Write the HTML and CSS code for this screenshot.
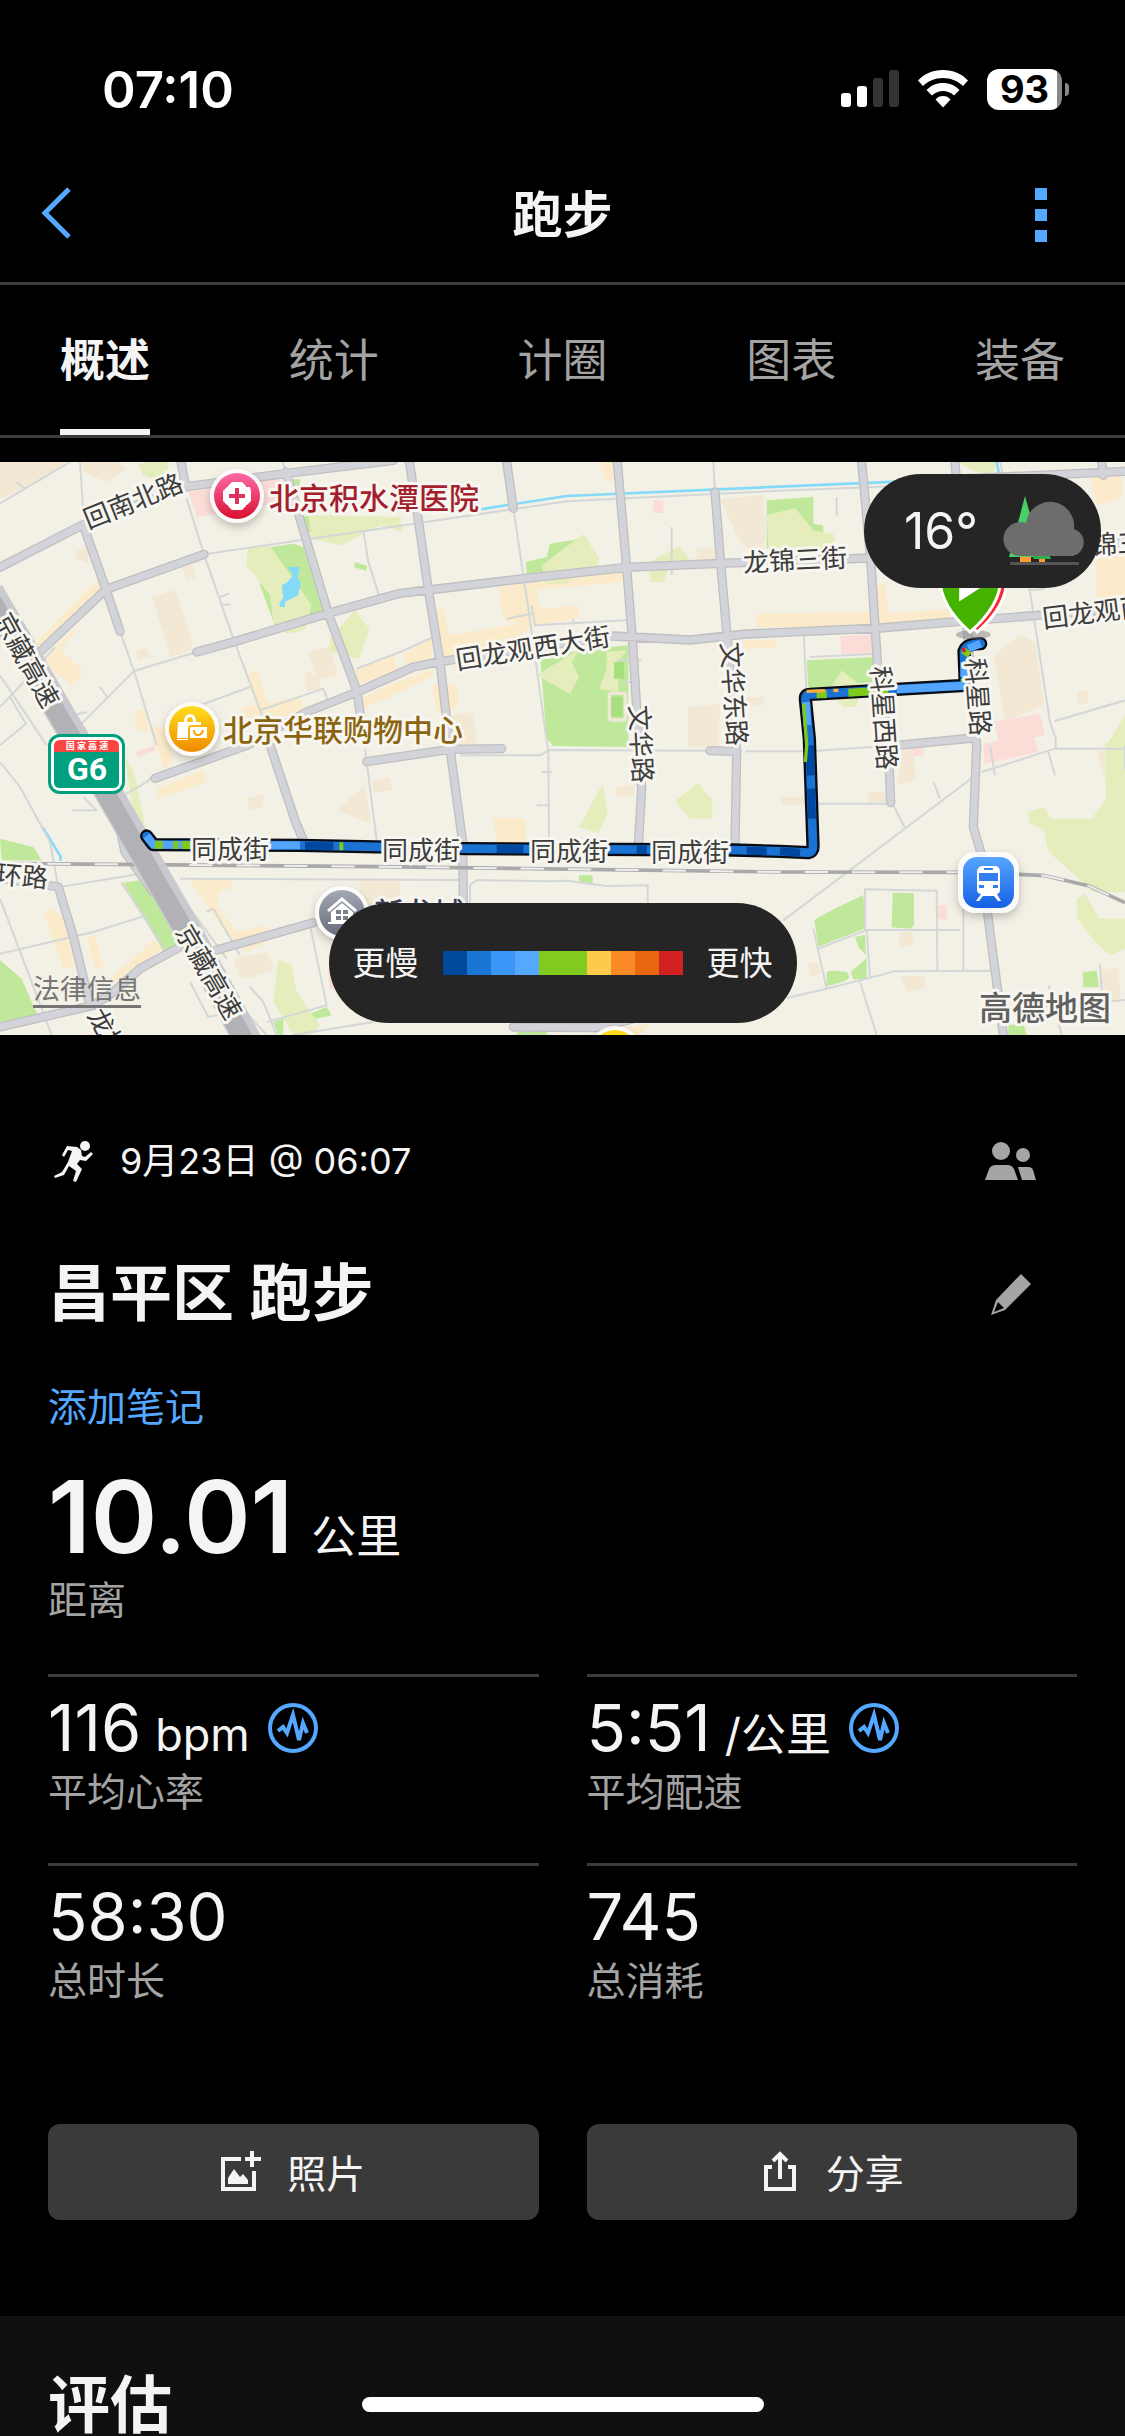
FILE: index.html
```html
<!DOCTYPE html>
<html lang="zh-CN">
<head>
  <meta charset="UTF-8">
  <meta name="viewport" content="width=device-width, initial-scale=1.0">
  <title>跑步</title>
  <link rel="stylesheet" href="styles.css">
</head>
<body>

  <!-- Status bar -->
  <div class="status-bar">
    <span class="time">07:10</span>
    <div class="status-icons">
      <svg class="signal" viewBox="0 0 58 38">
        <rect x="0" y="23" width="10" height="14" rx="3"></rect>
        <rect x="16" y="16" width="10" height="21" rx="3"></rect>
        <rect class="off" x="32" y="8" width="10" height="29" rx="3"></rect>
        <rect class="off" x="48" y="0" width="10" height="37" rx="3"></rect>
      </svg>
      <svg class="wifi" viewBox="0 0 52 38">
        <path d="M26 0C36 0 45 4 51 10.500L46 16C41 11 34 8 26 8S11 11 6 16L1 10.500C7 4 16 0 26 0Z"></path>
        <path d="M26 13C32.500 13 38 15.500 42.500 20L37 25.500C34 22.500 30 21 26 21S18 22.500 15 25.500L9.500 20C14 15.500 19.500 13 26 13Z"></path>
        <path d="M26 26C29 26 31.500 27 33.500 29.500L26 37.500L18.500 29.500C20.500 27 23 26 26 26Z"></path>
      </svg>
      <div class="battery"><span>93</span></div>
    </div>
  </div>

  <!-- Nav -->
  <header class="nav">
    <button class="nav-btn back" aria-label="返回">
      <svg viewBox="0 0 34 56"><path d="M29 2L5 26L29 50"></path></svg>
    </button>
    <h1>跑步</h1>
    <button class="nav-btn more" aria-label="更多">
      <svg viewBox="0 0 12 54">
        <rect width="12" height="12"></rect>
        <rect y="21" width="12" height="12"></rect>
        <rect y="42" width="12" height="12"></rect>
      </svg>
    </button>
  </header>

  <nav class="tabs">
    <a href="#" class="active">概述</a>
    <a href="#">统计</a>
    <a href="#">计圈</a>
    <a href="#">图表</a>
    <a href="#">装备</a>
  </nav>

  <!-- Map -->
  <section class="map">
    <svg class="map-canvas" viewBox="0 0 1125 573">
      <defs>
        <linearGradient id="red" x1="0" y1="0" x2="0" y2="1"><stop offset="0" stop-color="#ff6aa8"></stop><stop offset="1" stop-color="#d80f30"></stop></linearGradient>
        <linearGradient id="yellow" x1="0" y1="0" x2="0" y2="1"><stop offset="0" stop-color="#ffde1a"></stop><stop offset="1" stop-color="#f08a00"></stop></linearGradient>
        <linearGradient id="gray" x1="0" y1="0" x2="0" y2="1"><stop offset="0" stop-color="#a3a8b4"></stop><stop offset="1" stop-color="#686d7c"></stop></linearGradient>
        <linearGradient id="blue" x1="0" y1="0" x2="0" y2="1"><stop offset="0" stop-color="#58a6ff"></stop><stop offset="1" stop-color="#155fe4"></stop></linearGradient>
        <filter id="shadow" x="-50%" y="-50%" width="200%" height="200%"><feDropShadow dx="0" dy="4" stdDeviation="4" flood-opacity="0.25"></feDropShadow></filter>
        <path id="roads" d="M0 316L245 190L560 74L860 34L1180 -5M250 190L318 382L360 508M318 382L612 277M318 382L115 574M543 0L556 70M858 30L985 455L1072 690L1085 790M590 570L700 540L988 453L1200 394L1285 384L1570 350L1880 316L2160 304L2610 288L3375 240M465 949L740 850L920 750L1072 690L1240 615L1320 599L1840 522L2070 534L2240 516L2640 498L2880 478L3375 440M1100 899L1350 862L1505 860M1228 0L1258 194L1285 384L1320 599L1350 860L1388 1140L1390 1330M1520 0L1540 139M1852 0L1880 316L1897 530L1910 740L1925 980L1915 1150M2145 90L2162 304L2182 530L2210 870L2205 1150M2130 866L2205 868M2585 0L2612 290L2632 600L2665 850L2672 1022M2865 0L2900 480L2930 850L2920 1095L2945 1180L2962 1350L2995 1600L3010 1719M2900 50L3375 28M3305 0L3310 40M2690 850L2920 828M812 855L885 1075L912 1140M0 1249L140 1269L175 1275L220 1424L270 1630M0 1695L280 1630L340 1590L420 1520L540 1455M650 1464L940 1382M1540 1695L1790 1697L1900 1670M360 1100L375 1170L460 1290"></path>
        <path id="railway" d="M0 1204L1140 1214L2340 1230L2875 1231L3055 1237L3135 1241L3265 1271L3375 1322"></path>
        <path id="run" d="M440 1122L460 1148L900 1150L1400 1160L2200 1164L2340 1168L2425 1172Q2440 1170 2439 1150L2428 830L2416 710Q2416 697 2430 697L2895 670V640L2892 568Q2900 545 2942 545"></path>
      </defs>

      <svg width="1125" height="573" viewBox="0 0 3375 1719">
        <rect width="3375" height="1719" fill="#f3f0e5"></rect>

        <!-- blocks -->
        <g fill="#f2e8d3">
          <path d="M0 0H200L120 60L0 110ZM245 0H350L380 20L320 60L250 30ZM455 405L525 385L565 495L578 565L510 585L480 480ZM225 270L265 250V305L230 290ZM545 310L575 305L588 345L560 355ZM408 565L440 560L452 585L415 595ZM925 570L990 552L1012 640L955 655ZM915 630L955 640L960 680L920 688Z"></path>
          <path d="M2160 110L2290 100V280L2225 250ZM2090 260H2145V300H2090ZM2065 735L2160 725L2155 855H2065ZM2200 705H2290V730L2200 735ZM2980 580L3060 520L3105 540L3133 730L3015 778ZM3235 690L3262 685V725H3230ZM1350 760L1420 750L1430 850L1370 865ZM740 1010L790 995V1035L750 1045ZM1010 1045L1095 970L1113 1085L1060 1065ZM1118 955L1170 948L1176 985L1120 992ZM1080 1255H1200V1330H1080ZM700 1490L800 1470L824 1520L750 1548L720 1545ZM1846 977L1905 970L1900 1003H1846Z"></path>
          <path d="M2343 1005H2440V1028H2343ZM2605 990H2660V1020H2605ZM2710 860H2740L2747 955L2690 970ZM2698 1410H2738V1450L2698 1455ZM2700 1542H2775V1580L2720 1588ZM2425 1505L2455 1500L2460 1538L2430 1542ZM3290 866H3320V965ZM3300 1522L3355 1518L3362 1615L3310 1610Z"></path>
        </g>
        <g fill="#fbebcb">
          <path d="M100 550L295 350L303 382L120 580ZM125 595L225 500L230 510L180 560L252 630L215 668L140 615ZM405 748L435 742L445 810L405 800ZM455 795H500L520 900L490 920ZM740 640L770 620L805 728L775 745ZM725 735L900 708L915 750L740 790ZM1060 625L1180 580L1192 628L1070 668ZM1090 705L1200 660L1240 640V670L1090 740Z"></path>
          <path d="M1205 580L1295 525V590L1220 605ZM1310 440H1330L1345 520L1590 480V500L1500 560L1320 600ZM1495 375L1870 330V358L1610 385L1625 440L1738 430L1735 470L1600 490L1510 475ZM1140 680L1300 620V640L1140 720ZM1295 670L1370 665L1375 730L1340 755L1310 750ZM1800 0H1840V60L1810 50ZM2270 455L2640 450V495H2270ZM2230 535H2330V558L2230 560ZM2630 370L2655 365L2665 455L2850 440V490H2640ZM3270 45L3365 42V110L3290 130ZM3290 290L3375 280V410H3290ZM470 980L610 925L620 960L500 1000L475 1010ZM570 1255H695V1280L660 1285L650 1330L710 1410L800 1390V1440L740 1470L680 1420ZM130 1350L155 1340L190 1365L225 1510L190 1520ZM260 1425L285 1420L312 1520L285 1520ZM330 1550L460 1435L490 1460L340 1560ZM1480 1068H1577V1150L1490 1145ZM1860 1700L1950 1685L1920 1719H1850Z"></path>
        </g>
        <g fill="#fbdcd7">
          <path d="M565 90L840 48L850 120L590 165ZM1960 115H1990V153H1960ZM2520 522L2620 518V575H2525ZM2980 780L3120 755L3135 820L3000 850ZM2950 845L3100 820L3115 870L2955 905ZM2735 855H2770V882H2740ZM408 870L465 850V865L415 885ZM2815 1330H2840V1372H2815ZM985 1530L1010 1500V1580H988Z"></path>
        </g>
        <g fill="#bfe89a">
          <path d="M880 52H900V75H880ZM905 160L935 165V210L920 210ZM780 260L880 245L910 255L972 450L825 492L780 370ZM1065 300L1102 312L1098 326L1062 316ZM1650 245L1760 228L1775 270L1797 290L1790 315L1580 335L1578 300L1640 285ZM1620 580L1885 550L1885 855L1660 852L1640 830ZM2300 115L2440 105V185L2470 190V212L2300 260ZM2420 595L2625 585L2620 660L2425 680ZM0 1130L100 1155L125 1195H5ZM370 1262L420 1255L460 1290L540 1450L490 1468ZM0 1495L65 1550L95 1620L115 1662L0 1680ZM1737 1240H1778V1262H1737ZM930 1655L980 1635L995 1660L940 1672ZM820 1680L850 1670V1719H835ZM1550 1710H1640V1719H1550Z"></path>
          <path d="M2443 1375Q2450 1365 2590 1299Q2594 1350 2593 1400L2455 1454ZM2678 1292L2742 1294V1390L2730 1400L2675 1396ZM2480 1530Q2490 1522 2540 1530L2548 1545Q2540 1560 2480 1572ZM2552 1530L2600 1488V1550L2560 1552ZM2565 1425L2595 1418L2598 1480L2575 1455ZM3248 1530L3290 1526L3297 1575L3250 1576ZM3025 1690L3070 1684L3080 1719H3025Z"></path>
        </g>
        <g fill="#e5edbc">
          <path d="M415 10L440 0H505V35L470 55L430 40ZM925 160L1200 165L1210 210L1140 190L1025 250L935 230ZM745 258L810 252L935 430L915 505L860 515L820 480L810 400L737 308ZM1065 445L1108 500L1078 590L990 570V530ZM1625 310L1750 217L1795 285V312L1715 350L1700 365H1640ZM1945 302L2035 253L2072 295L2005 320L1990 360H1950ZM2300 160L2385 138L2440 205L2500 215L2508 260H2305ZM2875 0H2990L2980 35L2930 30ZM1610 640L1740 560L1715 600L1737 645L1710 695ZM1820 570L1880 565L1855 600V690L1797 680L1820 620ZM1808 965L1823 1055L1795 1112L1737 1095ZM2095 962L2137 1015V1070H2070L2025 1017ZM375 890L400 925L440 1110L405 1090ZM835 1490L875 1510L890 1590L960 1690L930 1719H880L820 1620ZM2485 690L2525 625L2580 670L2570 735H2530Z"></path>
          <path d="M3317 840L3375 850V1290H3280L3145 1168L3130 1105L3085 1080V1050L3130 1035L3155 1070H3275L3317 1015ZM3230 1310L3255 1295L3297 1370H3375V1460L3330 1480L3285 1440L3232 1370ZM3320 850L3375 760V880H3320Z"></path>
        </g>
        <path fill="#a8e080" d="M1842 600H1872V650H1842ZM1833 704H1868V764H1833Z"></path>
        <path fill="#85dafa" d="M862 315H898V330L892 342L902 365L895 400L870 412L855 420V435H840L838 425L850 405L845 370L860 362L880 340Z"></path>
        <g fill="none" stroke="#efe8d9" stroke-width="10">
          <rect x="1828" y="694" width="48" height="80" rx="6"></rect>
          <rect x="480" y="402" width="54" height="96" rx="27" transform="rotate(-12 507 450)"></rect>
          <rect x="2074" y="738" width="48" height="100" rx="20"></rect>
          <rect x="2245" y="150" width="46" height="92" rx="14"></rect>
        </g>

        <!-- canals -->
        <path class="canal" d="M1440 142L1700 102L2340 74L2760 56M2990 0L3002 60M128 1096L182 1184V1196"></path>

        <!-- small streets -->
        <path class="lane" d="M0 124L210 0M240 0L250 150M560 110L612 277L700 530L820 850M612 277L900 235L1140 200L1700 118L2340 86L2760 70M848 0L858 34M1090 205L1105 300L1137 400M50 60L75 80M660 405L688 395M665 428H692M360 508L402 627L470 850M402 627L590 570M402 627L245 785M170 770L260 750M300 675L325 710M600 730L750 675M780 745L970 680L985 720M1070 620L1200 570L1300 525M0 735L60 672L165 555M0 900L60 975L150 1140L175 1275M30 705L78 785L0 850M0 640L140 850M180 1275L430 1234M370 1000L440 960L455 945M250 1005L290 1045L215 1045M365 1262L500 1470M0 1310L155 1719M0 1475L280 1410L440 1360M1095 860L1130 1135M540 1250L1390 1254M1410 1330V1270L1430 1254L1640 1258L1700 1256L1820 1272L1943 1270V1330M570 1340L680 1490M600 1500L800 1719M620 1350L640 1340L720 1480M570 1560L625 1665L670 1655M930 1390L980 1630L800 1680M750 1575L790 1620L830 1719M880 1719L1120 1680"></path>
        <path class="lane" d="M1540 139L1585 440L1645 870L1647 1150M1647 864L2130 866M1647 864L1620 880H1380M1605 490L1880 475M1720 470V490M1595 430L1605 490M1520 470L1595 455M2410 495L2425 800L2430 868M2235 868H2430L2690 850M2430 585L2620 576M2140 0L2145 90M1850 595H1925M1870 660H1920M1625 930H1655M1610 1030H1650M2015 195V340M2510 105V160M3000 0L3090 390L3150 780L3167 830V860M3085 385L3135 380M3163 778L3375 715M2970 850L2985 940M2455 1025H2680M2680 1030L2715 1098M2920 945L2350 1375M2800 960L2820 1010M2945 930L3165 860H3375M3145 870L3165 940M3375 850V920M2595 1410V1282L2810 1286L2812 1525M2600 1404H2880M2455 1460L2600 1404L2610 1550M2440 1400L2480 1580L2640 1540L2680 1528L2990 1526M2360 1608L2480 1580M2580 1560L2630 1719M2890 1340V1525M3300 1508L3305 1585M3146 1570L3185 1719M3060 1640L3375 1614"></path>

        <!-- main roads, railway, highway -->
        <use href="#roads" class="casing"></use>
        <use href="#roads" class="paving"></use>
        <use href="#railway" class="rail"></use>
        <use href="#railway" class="rail-dash"></use>
        <path class="highway-side" d="M-30 390L190 770L330 1000L560 1400L745 1740"></path>
        <path class="highway" d="M-40 390L180 770L320 1000L550 1400L735 1740"></path>

        <!-- track -->
        <use href="#run" class="track-outline"></use>
        <use href="#run" class="track-base"></use>
        <g class="pace">
          <path stroke="#52a5fb" d="M440 1122L460 1148H570M640 1151L900 1150M2418 720L2422 790M2690 682L2890 671M2905 560L2942 545M2893 645V600"></path>
          <path stroke="#00479e" d="M915 1152L1000 1153M1160 1156H1340M1490 1161L1570 1162M1620 1162H1700M1910 1163L1940 1164M2240 1166L2300 1168M2340 1168L2400 1172M2430 850L2432 940M2433 980L2436 1070"></path>
          <path stroke="#80c81c" d="M465 1148H488M520 1149H535M545 1149L640 1150M1018 1153H1030M2450 697H2480M2545 692L2665 685M2893 580L2905 565M2894 650V660"></path>
        </g>
        <g class="pace thin">
          <path stroke="#80c81c" d="M2411 725L2420 850L2416 900"></path>
          <path stroke="#fbb040" d="M2420 688L2475 686M2500 685H2515"></path>
          <path stroke="#d4221f" d="M2888 558L2895 570"></path>
        </g>

        <!-- start and finish pins -->
        <ellipse cx="2920" cy="518" rx="52" ry="14" fill="#777" opacity="0.45"></ellipse>
        <g class="pins">
          <path fill="#fb2530" d="M2932 510Q2842 430 2845 350A87 87 0 0 1 3020 350Q3022 430 2932 510Z"></path>
          <path fill="#46b200" d="M2910 510Q2820 430 2820 350A90 90 0 0 1 3002 350Q3002 430 2910 510Z"></path>
          <path fill="#fff" stroke="none" d="M2882 310V410L2960 360Z"></path>
        </g>
      </svg>

      <!-- road names -->
      <g class="road-names">
        <text x="133" y="39" transform="rotate(-22 133 39)">回南北路</text>
        <text x="27" y="198" transform="rotate(61 27 198)">京藏高速</text>
        <text x="209" y="510" transform="rotate(60 209 510)">京藏高速</text>
        <text x="108" y="571" transform="rotate(60 108 571)">龙域</text>
        <text x="22" y="414" transform="rotate(5 22 414)">环路</text>
        <text x="230" y="387">同成街</text>
        <text x="421" y="388">同成街</text>
        <text x="569" y="389">同成街</text>
        <text x="690" y="390">同成街</text>
        <text x="533" y="186" transform="rotate(-9 533 186)">回龙观西大街</text>
        <text x="795" y="98" transform="rotate(-3 795 98)">龙锦三街</text>
        <text x="734" y="232" transform="rotate(86 734 232)">文华东路</text>
        <text x="641" y="282" transform="rotate(87 641 282)">文华路</text>
        <text x="884" y="256" transform="rotate(86 884 256)">科星西路</text>
        <text x="978" y="235" transform="rotate(86 978 235)">科星路</text>
        <text x="1120" y="147" transform="rotate(-7 1120 147)">回龙观西大街</text>
        <text x="1130" y="81" transform="rotate(-3 1130 81)">锦三街</text>
      </g>

      <!-- places -->
      <g filter="url(#shadow)" fill="#fff" fill-opacity="0.85">
        <circle cx="237" cy="34" r="27"></circle>
        <circle cx="192" cy="267" r="27"></circle>
        <circle cx="342" cy="451" r="27"></circle>
        <circle cx="615" cy="591" r="27"></circle>
        <rect x="958" y="390" width="61" height="61" rx="17"></rect>
      </g>
      <circle cx="237" cy="34" r="23" fill="url(#red)"></circle>
      <circle cx="192" cy="267" r="23" fill="url(#yellow)"></circle>
      <circle cx="342" cy="451" r="23" fill="url(#gray)"></circle>
      <circle cx="615" cy="591" r="23" fill="url(#yellow)"></circle>
      <rect x="963" y="395" width="51" height="51" rx="14" fill="url(#blue)"></rect>
      <g fill="#fff">
        <path d="M232 20H242L246 24V25H250L251 29V39L247 43H246V44L242 48H232L228 44V43H227L223 39V29L227 25H228V24Z"></path>
        <path fill="#e2305c" d="M235 26H239V32H245V36H239V42H235V36H229V32H235Z"></path>
        <path d="M178 260H201V263H191Q188 263 188 266V276H177ZM190 265H207V276H190ZM177 277H188V278H177ZM184 260Q184 252 190 252T196 260H193Q193 255 190 255T187 260Z"></path>
        <path fill="none" stroke="#f5a800" stroke-width="2" d="M194 268Q194 273 198 273T203 268"></path>
        <path d="M342 435L357 448L355 450L342 439L329 450L327 448ZM331 450L342 441L353 450V460H356V462H328V460H331Z"></path>
        <path fill="#7b808d" d="M336 448H341V452H336ZM343 448H348V452H343ZM336 454H341V458H336ZM343 454H348V458H343Z"></path>
        <path d="M982 404H996Q1000 405 1000 410V428Q1000 432 996 432H982Q977 432 977 428V410Q977 405 982 404ZM981 432L976 439H979L983 434H994L998 439H1001L997 432Z"></path>
        <path fill="#347fef" d="M984 406H993V408H984ZM979 411H998V419H979ZM979 423H984V426H979ZM993 423H998V426H993Z"></path>
      </g>
      <g class="place-names">
        <text x="269" y="47" fill="#a31f2e">北京积水潭医院</text>
        <text x="223" y="279" fill="#8a6410">北京华联购物中心</text>
        <text x="374" y="462" fill="#3c3f58">新龙城</text>
      </g>

      <!-- highway shield -->
      <rect x="48" y="272" width="77" height="60" rx="12" fill="#00a07e"></rect>
      <rect x="51" y="275" width="71" height="54" rx="9" fill="#fff"></rect>
      <path fill="#fc4440" d="M54 290V284Q54 278 60 278H113Q119 278 119 284V290Z"></path>
      <path fill="#00a07e" d="M54 290H119V320Q119 326 113 326H60Q54 326 54 320Z"></path>
      <text class="shield-top" x="87" y="287">国 家 高 速</text>
      <text class="shield-code" x="87" y="318">G6</text>

      <text class="brand" x="1111" y="558">高德地图</text>
    </svg>

    <a href="#" class="legal">法律信息</a>

    <div class="weather">
      <span>16°</span>
      <svg viewBox="0 0 84 70">
        <path fill="#48cf66" d="M23 0L40 61H7Z"></path>
        <path fill="#2fae4c" d="M40 40L49 63H31Z"></path>
        <path fill="#ff9a30" d="M18 61H29V66H18ZM37 63H43V66H37Z"></path>
        <rect x="8" y="66" width="69" height="3" rx="1" fill="#555"></rect>
        <path fill="#6d6d6d" d="M17 60A17 17 0 1 1 24 27A24 24 0 0 1 72 33A14 14 0 0 1 71 60Z"></path>
      </svg>
    </div>

    <div class="legend">
      <span>更慢</span>
      <div class="scale">
        <i class="c1"></i><i class="c2"></i><i class="c3"></i><i class="c4"></i><i class="c5"></i>
        <i class="c5"></i><i class="c6"></i><i class="c7"></i><i class="c8"></i><i class="c9"></i>
      </div>
      <span>更快</span>
    </div>
  </section>

  <!-- Activity summary -->
  <main class="summary">
    <div class="row date-row">
      <svg class="runner" viewBox="0 0 40 42">
        <circle cx="31" cy="6" r="5"></circle>
        <path d="M13 6L23 7L27 10L28 16L31 17L37 12L39 14L32 21L26 20L23 24L28 29L22 42L19 41L22 31L15 26L10 35L1 38L0 36L8 32L14 22L18 11L14 10L10 17L8 15Z"></path>
      </svg>
      <span class="date">9月23日 @ 06:07</span>
      <button class="icon-btn" aria-label="隐私">
        <svg class="people" viewBox="0 0 52 39">
          <circle cx="16" cy="9" r="9"></circle>
          <circle cx="38" cy="13" r="7"></circle>
          <path d="M0 38L4 27Q6 23 11 23H22Q27 23 29 27L33 38ZM33 25H43Q47 25 48 28L51 38H37Z"></path>
        </svg>
      </button>
    </div>

    <div class="row title-row">
      <h2>昌平区 跑步</h2>
      <button class="icon-btn" aria-label="编辑">
        <svg class="pencil" viewBox="0 0 40 41">
          <path fill-rule="evenodd" d="M30 0L40 10L14 36L0 41L5 26ZM7 28L3 38L13 34Z"></path>
        </svg>
      </button>
    </div>

    <a href="#" class="note">添加笔记</a>

    <div class="distance">
      <p class="total">10.01<span class="unit">公里</span></p>
      <p class="label">距离</p>
    </div>

    <div class="stats">
      <div class="stat">
        <p class="value">116<span class="unit">bpm</span>
          <svg class="pulse" viewBox="0 0 50 50"><circle cx="25" cy="25" r="23"></circle><path d="M10 28L15 24L19 30L25 12L31 37L35 20L39 30"></path></svg>
        </p>
        <p class="label">平均心率</p>
      </div>
      <div class="stat">
        <p class="value">5:51<span class="unit">/公里</span>
          <svg class="pulse" viewBox="0 0 50 50"><circle cx="25" cy="25" r="23"></circle><path d="M10 28L15 24L19 30L25 12L31 37L35 20L39 30"></path></svg>
        </p>
        <p class="label">平均配速</p>
      </div>
      <div class="stat">
        <p class="value">58:30</p>
        <p class="label">总时长</p>
      </div>
      <div class="stat">
        <p class="value">745</p>
        <p class="label">总消耗</p>
      </div>
    </div>

    <div class="actions">
      <button>
        <svg viewBox="0 0 40 40"><path fill="none" stroke="#f4f4f4" stroke-width="4" d="M20 8H2V38H33V20M31 0V16M24 8H40"></path><path fill="#f4f4f4" d="M7 33V27L13 18L19 26L22 23L27 29V33Z"></path></svg>
        照片
      </button>
      <button>
        <svg viewBox="0 0 40 40"><path fill="none" stroke="#f4f4f4" stroke-width="4" d="M12 16H6V38H34V16H28M20 28V4M13 10L20 3L27 10"></path></svg>
        分享
      </button>
    </div>
  </main>

  <section class="evaluation">
    <h2>评估</h2>
  </section>

  <div class="home-indicator"></div>

</body>
</html>
```

FILE: styles.css
```css
* {
  box-sizing: border-box;
  margin: 0;
  padding: 0;
}

body {
  display: flex;
  flex-direction: column;
  min-height: 100vh;
  background: #000;
  color: #f4f4f4;
  font-family: Inter, "Noto Sans CJK SC", sans-serif;
}

button {
  border: none;
  background: none;
  color: inherit;
  font-family: inherit;
}

a {
  text-decoration: none;
}

svg {
  display: block;
}

/* Status bar */
.status-bar {
  display: flex;
  justify-content: space-between;
  align-items: center;
  height: 148px;
  padding: 30px 63px 0 102px;
  color: #fff;
}

.time {
  font-size: 51px;
  font-weight: 600;
}

.status-icons {
  display: flex;
  align-items: center;
  gap: 18px;
  fill: #fff;
}

.signal {
  width: 58px;
  height: 38px;
}

.signal .off {
  fill: #333;
}

.wifi {
  width: 52px;
  height: 38px;
}

.battery {
  position: relative;
  width: 75px;
  height: 41px;
  border-radius: 12px;
  background: linear-gradient(to right, #fff 70px, #888 70px);
  color: #000;
  font-size: 38px;
  font-weight: 700;
  line-height: 41px;
  text-align: center;
}

.battery::after {
  content: "";
  position: absolute;
  top: 14px;
  right: -7px;
  width: 4px;
  height: 13px;
  border-radius: 0 4px 4px 0;
  background: #888;
}

/* Nav */
.nav {
  display: flex;
  justify-content: space-between;
  align-items: center;
  height: 137px;
  padding: 0 40px;
  border-bottom: 3px solid #3c3c3c;
}

.nav h1 {
  font-size: 50px;
  font-weight: 600;
  line-height: 60px;
}

.nav-btn {
  display: flex;
  align-items: center;
  width: 90px;
  height: 90px;
}

.back svg {
  width: 34px;
  height: 56px;
  fill: none;
  stroke: #55a8ff;
  stroke-width: 5;
}

.more {
  justify-content: flex-end;
  padding-right: 38px;
}

.more svg {
  width: 12px;
  height: 54px;
  fill: #55a8ff;
}

/* Tabs */
.tabs {
  display: flex;
  justify-content: space-between;
  padding: 0 60px;
  border-bottom: 3px solid #3c3c3c;
}

.tabs a {
  height: 150px;
  color: #a3a3a3;
  font-size: 45px;
  line-height: 152px;
}

.tabs .active {
  border-bottom: 6px solid #f4f4f4;
  color: #f4f4f4;
  font-weight: 600;
}

/* Map */
.map {
  position: relative;
  margin-top: 24px;
  overflow: hidden;
}

.map-canvas {
  width: 100%;
  height: auto;
}

.canal,
.lane,
.casing,
.paving,
.rail,
.rail-dash,
.highway,
.highway-side,
.track-outline,
.track-base,
.pace {
  fill: none;
  stroke-linejoin: round;
}

.canal {
  stroke: #85dafa;
  stroke-width: 8;
}

.lane {
  stroke: #d3d7d8;
  stroke-width: 6;
}

.casing {
  stroke: #c0c0c3;
  stroke-width: 28;
  stroke-linecap: round;
}

.paving {
  stroke: #d3d4d9;
  stroke-width: 20;
  stroke-linecap: round;
}

.rail {
  stroke: #a9a9a9;
  stroke-width: 11;
}

.rail-dash {
  stroke: #eee;
  stroke-width: 6;
  stroke-dasharray: 70 72;
}

.highway-side {
  stroke: #c9cacf;
  stroke-width: 84;
}

.highway {
  stroke: #b1b1b6;
  stroke-width: 58;
}

.track-outline {
  stroke: #080c14;
  stroke-width: 40;
  stroke-linecap: round;
}

.track-base {
  stroke: #1a72d2;
  stroke-width: 26;
  stroke-linecap: round;
}

.pace {
  stroke-width: 24;
}

.thin {
  stroke-width: 10;
}

.pins path {
  stroke: #fff;
  stroke-width: 9;
}

.map-canvas text {
  paint-order: stroke;
  stroke: #f8f6f0;
  stroke-width: 6px;
  stroke-linejoin: round;
}

.road-names text {
  fill: #3d3d3d;
  font-size: 26px;
  text-anchor: middle;
  dominant-baseline: central;
}

.place-names text {
  font-size: 30px;
  font-weight: 500;
}

.map-canvas .shield-top,
.map-canvas .shield-code {
  fill: #fff;
  stroke: none;
  text-anchor: middle;
}

.shield-top {
  font-size: 9px;
  font-weight: 700;
}

.shield-code {
  font-family: Roboto, sans-serif;
  font-size: 32px;
  font-weight: 700;
}

.brand {
  fill: #606060;
  font-size: 33px;
  font-weight: 500;
  text-anchor: end;
}

.legal {
  position: absolute;
  bottom: 27px;
  left: 33px;
  border-bottom: 3px solid #757575;
  color: #757575;
  font-size: 27px;
  line-height: 30px;
}

.weather {
  position: absolute;
  top: 12px;
  right: 24px;
  display: flex;
  align-items: center;
  gap: 24px;
  height: 114px;
  padding: 0 15px 0 40px;
  border-radius: 57px;
  background: #252525;
  font-size: 50px;
}

.weather svg {
  width: 84px;
  height: 70px;
}

.legend {
  position: absolute;
  bottom: 12px;
  left: 50%;
  display: flex;
  align-items: center;
  gap: 24px;
  height: 120px;
  padding: 0 24px;
  border-radius: 60px;
  background: #252525;
  font-size: 33px;
  line-height: 36px;
  white-space: nowrap;
  transform: translateX(-50%);
}

.scale {
  display: flex;
}

.scale i {
  width: 24px;
  height: 24px;
}

.c1 { background: #004a9e; }
.c2 { background: #1976d5; }
.c3 { background: #3b96f7; }
.c4 { background: #55a8ff; }
.c5 { background: #82ca1e; }
.c6 { background: #fccb4d; }
.c7 { background: #fa8a26; }
.c8 { background: #e9680f; }
.c9 { background: #d32020; }

/* Summary */
.summary {
  padding: 103px 48px 96px;
}

.row {
  display: flex;
  align-items: center;
}

.date-row {
  height: 46px;
  padding-left: 6px;
}

.runner {
  width: 40px;
  height: 42px;
  fill: #f4f4f4;
}

.date {
  margin-left: 26px;
  font-size: 36px;
  line-height: 40px;
}

.icon-btn {
  display: flex;
  justify-content: center;
  width: 132px;
  margin-left: auto;
  fill: #a5a5a5;
}

.people {
  width: 52px;
  height: 39px;
}

.pencil {
  width: 40px;
  height: 41px;
}

.title-row {
  height: 84px;
  margin-top: 68px;
}

h2 {
  font-size: 62px;
  font-weight: 600;
  line-height: 60px;
}

.note {
  display: block;
  width: max-content;
  margin-top: 44px;
  color: #55a8ff;
  font-size: 39px;
  line-height: 54px;
}

.distance {
  margin-top: 32px;
}

.total {
  display: flex;
  align-items: baseline;
  height: 100px;
  font-size: 101px;
  font-weight: 600;
  line-height: 100px;
}

.unit {
  margin-left: 18px;
  font-size: 45px;
  font-weight: 400;
}

.label {
  color: #a3a3a3;
  font-size: 39px;
  line-height: 48px;
}

.distance .label {
  margin-top: 10px;
}

.stats {
  display: grid;
  grid-template-columns: 1fr 1fr;
  column-gap: 48px;
  margin-top: 50px;
}

.stat {
  padding: 15px 0 47px;
  border-top: 3px solid #3c3c3c;
}

.value {
  display: flex;
  align-items: baseline;
  height: 72px;
  margin-bottom: 4px;
  font-size: 65px;
  line-height: 72px;
}

.value .unit {
  margin-left: 14px;
}

.pulse {
  align-self: center;
  width: 50px;
  height: 50px;
  margin-left: 18px;
  fill: none;
  stroke: #55a8ff;
  stroke-width: 4;
}

.actions {
  display: grid;
  grid-template-columns: 1fr 1fr;
  gap: 48px;
  margin-top: 72px;
}

.actions button {
  display: flex;
  justify-content: center;
  align-items: center;
  gap: 26px;
  height: 96px;
  padding-bottom: 2px;
  border-radius: 12px;
  background: #3a3a3a;
  font-size: 39px;
}

.actions svg {
  width: 40px;
  height: 40px;
}

/* Evaluation */
.evaluation {
  flex: 1;
  padding: 60px 48px 0;
  background: #101010;
}

.home-indicator {
  position: fixed;
  bottom: 24px;
  left: 50%;
  width: 402px;
  height: 15px;
  border-radius: 8px;
  background: #fff;
  transform: translateX(-50%);
}
```
